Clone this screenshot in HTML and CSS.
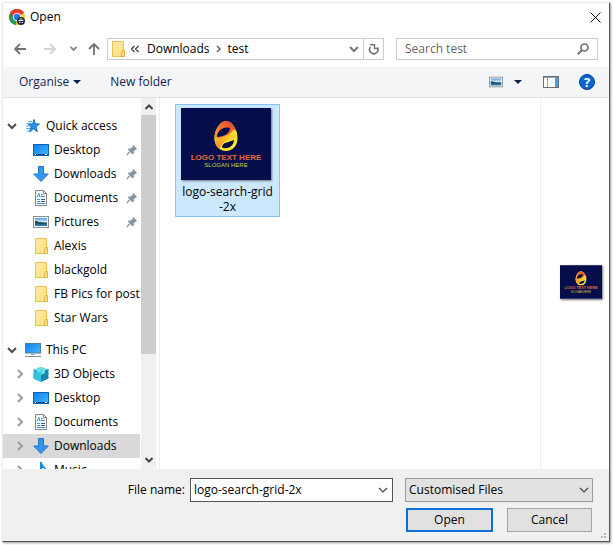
FILE: index.html
```html
<!DOCTYPE html>
<html lang="en-GB">
<head>
<meta charset="utf-8">
<title>Open</title>
<link rel="stylesheet" href="styles.css">
</head>
<body>
<svg class="defs" aria-hidden="true">
  <defs>
    <linearGradient id="sky" x1="0" y1="0" x2="1" y2="1"><stop offset="0" stop-color="#0c80e8"/><stop offset="1" stop-color="#45b8ff"/></linearGradient>
    <linearGradient id="gold" x1="0" y1="0" x2="1" y2="1"><stop offset="0" stop-color="#ffeaa6"/><stop offset="1" stop-color="#ffdf7d"/></linearGradient>
    <linearGradient id="egg-red" x1="0" y1="1" x2="1" y2="0"><stop offset="0" stop-color="#f9b428"/><stop offset=".5" stop-color="#ef7030"/><stop offset="1" stop-color="#e8382f"/></linearGradient>
    <linearGradient id="egg-band" x1="0" y1="1" x2="1" y2="0"><stop offset="0" stop-color="#f08a2c"/><stop offset=".6" stop-color="#fdc52c"/><stop offset="1" stop-color="#ffe62e"/></linearGradient>
    <linearGradient id="scene" x1="0" y1="0" x2="0" y2="1"><stop offset="0" stop-color="#4c9be8"/><stop offset=".5" stop-color="#dff1fb"/><stop offset=".6" stop-color="#2c5d6b"/><stop offset="1" stop-color="#2b7dbd"/></linearGradient>
    <symbol id="i-desktop" viewBox="0 0 16 16"><rect x=".5" y="2.500" width="15" height="11" fill="url(#sky)" stroke="#0b62b4"/><path d="M1 12.500h14" stroke="#0a4b91"/><path d="M2 12.500h1M12 12.500h2" stroke="#fff"/></symbol>
    <symbol id="i-down" viewBox="0 0 16 16"><path d="M5.500.5h5V8h4.800L8 15.500.7 8h4.800z" fill="#3795ea" stroke="#2076c8"/></symbol>
    <symbol id="i-doc" viewBox="0 0 16 16"><path d="M2.500.5h8l3 3v12h-11z" fill="#fff" stroke="#858585"/><path d="M10.500.5v3h3" fill="none" stroke="#858585"/><path d="M4 7.500l2-4 1 4M8 4.500h2M8 6.500h4M4 9.500h3M4 11.500h3M4 13.500h8" fill="none" stroke="#3f8fd8"/><path d="M8 9.500h4M8 11.500h4" stroke="#1f5f9f"/></symbol>
    <symbol id="i-pic" viewBox="0 0 16 16"><rect x=".5" y="2.500" width="15" height="11" fill="#fff" stroke="#878f96"/><rect x="2" y="4" width="12" height="8" fill="url(#scene)"/><path d="M2 7c3 0 6 2 12 2v1C9 10 6 9.500 2 9.500z" fill="#1e4d56"/></symbol>
    <symbol id="i-folder" viewBox="0 0 16 16"><path d="M2.500.5h11v15h-11z" fill="url(#gold)" stroke="#e8c04c"/><path d="M12.500 9.500h2v6h-3v-2z" fill="#ffe594" stroke="#e0b02c"/></symbol>
    <symbol id="i-star" viewBox="0 0 16 16"><path d="M9 1.500l1.300 4.300 4.200.2-3.500 2.800 1.400 5-3.800-2.900-4 3 1.500-5L3 6l4.600-.2z" fill="#2492e8" stroke="#1478c8"/><path d="M3 3.500h4M1.500 5.500H6M1 8h5M1 10.500h4M2 13h3" stroke="#55aef0"/></symbol>
    <symbol id="i-pc" viewBox="0 0 16 16"><rect x=".5" y="1.500" width="15" height="9.500" fill="url(#sky)" stroke="#4b7e9d"/><path d="M6 12h4v1H6z" fill="#9ab"/><path d="M0 14.500h16" stroke="#7b8c9b"/></symbol>
    <symbol id="i-cube" viewBox="0 0 16 16"><path d="M8 1l7.500 2L8 5.500.5 3z" fill="#9ceaf2"/><path d="M.5 3L8 5.500V16L.5 12.500z" fill="#26b5d2"/><path d="M15.500 3L8 5.500V16l7.500-3.500z" fill="#1189ad"/><path d="M4 2l4-1 4 1v5L8 9 4 7z" fill="#67dbe8"/><path d="M.5 8L8 5.500V16L.5 12.500z" fill="#35c5db"/></symbol>
    <symbol id="i-note" viewBox="0 0 16 16"><path d="M7 0h2c0 4 5 5 4 9-1-3-3-3-4-3v7a3 2.500 0 11-2-2z" fill="#128be8"/></symbol>
    <symbol id="i-pin" viewBox="0 0 12 12"><path d="M7 .8L11.200 5l-1.400.5-2 2 .1 2L6.500 10.300 1.800 5.600l1-1.200 2 .1 2-2z" fill="#8795a1"/><path d="M4 7.500L.8 11" stroke="#8795a1" stroke-width="1.200"/></symbol>
    <symbol id="i-open" viewBox="0 0 16 16"><path d="M4 6l4 4 4-4" fill="none" stroke="#4d4d4d" stroke-width="2"/></symbol>
    <symbol id="i-closed" viewBox="0 0 16 16"><path d="M6 4l4 4-4 4" fill="none" stroke="#9b9b9b" stroke-width="2"/></symbol>
    <symbol id="i-thin" viewBox="0 0 10 10"><path d="M1 3l4 4 4-4" fill="none" stroke="#444" stroke-width="1.200"/></symbol>
    <symbol id="i-caret" viewBox="0 0 8 4"><path d="M0 0h8L4 4z" fill="#0f2350"/></symbol>
    <symbol id="art" viewBox="0 0 90 72">
      <rect width="90" height="72" fill="#050d4b"/>
      <path d="M45 13c6 0 11.500 9 11.500 17 0 8-5 13-11.500 13s-11.500-5-11.500-13c0-8 5.500-17 11.500-17z" fill="#ffe62e"/>
      <path d="M33.800 33C32 24 39 13 45 13c5 0 9 6 10.500 11-4 0-5 3-10 5-5 2-9 1-11.700 4z" fill="url(#egg-red)"/>
      <path d="M34 34c3-5 15-5 18-12 1-1 3 0 4 3 1 5-4 6-8 7-5 1-8 4-9 9-2-1-4-3-5-7z" fill="url(#egg-band)"/>
      <path d="M36 29c0-6 6-11 13-9 0 5-6 9-13 9z" fill="#050d4b"/>
      <path d="M41 39.500c0-5 6-5 12-7.500 0 6-7 10-12 7.500z" fill="#050d4b"/>
      <text class="art-name" x="45" y="52" text-anchor="middle">LOGO TEXT HERE</text>
      <text class="art-slogan" x="45" y="59" text-anchor="middle">SLOGAN HERE</text>
    </symbol>
  </defs>
</svg>
<div class="window">
  <header class="title">
    <svg width="16" height="16" viewBox="0 0 16 16" aria-hidden="true"><circle cx="8" cy="8" r="8" fill="#ffcd40"/><path d="M8 8L1.100 4A8 8 0 0114.900 4z" fill="#e33b2e"/><path d="M8 8l-1 8A8 8 0 011.100 4z" fill="#1c9a50"/><path d="M1 4a8 8 0 0114 0H8L4 8z" fill="#e33b2e"/><circle cx="8" cy="8" r="4" fill="#fff"/><circle cx="8" cy="8" r="3.200" fill="#2b78e4"/><circle cx="12" cy="12" r="4" fill="#202733"/><path d="M9.500 11.500h5M10 13.500h1.500M12.500 13.500H14M10.500 10h3" stroke="#dfe6ef"/></svg>
    <h1>Open</h1>
    <button class="plain close" aria-label="Close"><svg width="11" height="11" viewBox="0 0 11 11"><path d="M.5.5l10 10M10.500.5l-10 10" stroke="#111"/></svg></button>
  </header>
  <nav class="navbar">
    <button class="plain" aria-label="Back"><svg width="12" height="12" viewBox="0 0 12 12"><path d="M12 6H1M6 1L1 6l5 5" fill="none" stroke="#737373" stroke-width="1.800"/></svg></button>
    <button class="plain forward" aria-label="Forward"><svg width="12" height="12" viewBox="0 0 12 12"><path d="M0 6h11M6 1l5 5-5 5" fill="none" stroke="#d4d4d4" stroke-width="1.800"/></svg></button>
    <button class="plain recent" aria-label="Recent locations"><svg width="7" height="12" viewBox="0 0 7 12"><path d="M.5 4l3 3 3-3" fill="none" stroke="#888" stroke-width="1.800"/></svg></button>
    <button class="plain up" aria-label="Up"><svg width="12" height="12" viewBox="0 0 12 12"><path d="M6 12V1M1 6l5-5 5 5" fill="none" stroke="#737373" stroke-width="1.800"/></svg></button>
    <div class="address">
      <svg width="16" height="16" aria-hidden="true"><use href="#i-folder"/></svg>
      <svg class="crumb-more" width="8" height="8" viewBox="0 0 8 8" aria-hidden="true"><path d="M3.500 1l-3 3 3 3M7.500 1l-3 3 3 3" fill="none" stroke="#444" stroke-width="1.300"/></svg>
      <a href="#downloads">Downloads</a>
      <svg class="crumb-sep" width="6" height="8" viewBox="0 0 6 8" aria-hidden="true"><path d="M1 1l3 3-3 3" fill="none" stroke="#666" stroke-width="1.500"/></svg>
      <a href="#test">test</a>
      <button class="plain history" aria-label="Previous locations"><svg width="10" height="10" viewBox="0 0 10 10"><path d="M1 3l4 4 4-4" fill="none" stroke="#777" stroke-width="2"/></svg></button>
      <button class="plain refresh" aria-label="Refresh"><svg width="12" height="12" viewBox="0 0 12 12"><path d="M2.500 4A4.200 4.200 0 109.500 4.500" fill="none" stroke="#737373" stroke-width="1.600"/><path d="M2 1.800h5.200M6.500 1v4.500h3.500" fill="none" stroke="#737373" stroke-width="1.500"/></svg></button>
    </div>
    <div class="search">
      <input type="search" aria-label="Search test" placeholder="Search test">
      <svg width="12" height="12" viewBox="0 0 12 12" aria-hidden="true"><circle cx="7.500" cy="4.500" r="3.500" fill="none" stroke="#737373" stroke-width="1.700"/><path d="M5 7L.8 11.200" stroke="#737373" stroke-width="2"/></svg>
    </div>
  </nav>
  <div class="toolbar">
    <button class="plain">Organise <svg width="8" height="4" aria-hidden="true"><use href="#i-caret"/></svg></button>
    <button class="plain new-folder">New folder</button>
    <button class="plain view" aria-label="Change view"><svg width="14" height="14"><use href="#i-pic"/></svg></button>
    <button class="plain view-more" aria-label="More view options"><svg width="8" height="4"><use href="#i-caret"/></svg></button>
    <button class="plain pane" aria-label="Preview pane"><svg width="16" height="12" viewBox="0 0 16 12"><rect x=".5" y=".5" width="15" height="11" fill="#fff" stroke="#6b6f75"/><path d="M1 1.500h14M4.500 2v9" stroke="#9aa0a6"/><path d="M12 1h3v10h-3z" fill="#3fa2ee"/></svg></button>
    <button class="plain help" aria-label="Help"><svg width="16" height="16" viewBox="0 0 16 16"><circle cx="8" cy="8" r="7.500" fill="#0a66cf" stroke="#06408f"/><text class="help-mark" x="8" y="13" text-anchor="middle">?</text></svg></button>
  </div>
  <main class="content">
    <ul class="tree">
      <li class="group"><svg><use href="#i-open"/></svg><svg><use href="#i-star"/></svg><span>Quick access</span></li>
      <li><i></i><svg><use href="#i-desktop"/></svg><span>Desktop</span><svg class="pin"><use href="#i-pin"/></svg></li>
      <li><i></i><svg><use href="#i-down"/></svg><span>Downloads</span><svg class="pin"><use href="#i-pin"/></svg></li>
      <li><i></i><svg><use href="#i-doc"/></svg><span>Documents</span><svg class="pin"><use href="#i-pin"/></svg></li>
      <li><i></i><svg><use href="#i-pic"/></svg><span>Pictures</span><svg class="pin"><use href="#i-pin"/></svg></li>
      <li><i></i><svg><use href="#i-folder"/></svg><span>Alexis</span></li>
      <li><i></i><svg><use href="#i-folder"/></svg><span>blackgold</span></li>
      <li><i></i><svg><use href="#i-folder"/></svg><span>FB Pics for posting</span></li>
      <li><i></i><svg><use href="#i-folder"/></svg><span>Star Wars</span></li>
      <li class="group second"><svg><use href="#i-open"/></svg><svg><use href="#i-pc"/></svg><span>This PC</span></li>
      <li><svg><use href="#i-closed"/></svg><svg><use href="#i-cube"/></svg><span>3D Objects</span></li>
      <li><svg><use href="#i-closed"/></svg><svg><use href="#i-desktop"/></svg><span>Desktop</span></li>
      <li><svg><use href="#i-closed"/></svg><svg><use href="#i-doc"/></svg><span>Documents</span></li>
      <li class="current"><svg><use href="#i-closed"/></svg><svg><use href="#i-down"/></svg><span>Downloads</span></li>
      <li><svg><use href="#i-closed"/></svg><svg><use href="#i-note"/></svg><span>Music</span></li>
    </ul>
    <div class="scrollbar" aria-hidden="true">
      <svg width="10" height="10" viewBox="0 0 10 10"><path d="M1.500 7L5 3.500 8.500 7" fill="none" stroke="#444" stroke-width="2"/></svg>
      <div class="track"><div class="thumb"></div></div>
      <svg width="10" height="10" viewBox="0 0 10 10"><path d="M1.500 3L5 6.500 8.500 3" fill="none" stroke="#444" stroke-width="2"/></svg>
    </div>
    <section class="files" aria-label="Files">
      <button class="tile"><svg class="thumb-art" width="90" height="72"><use href="#art"/></svg><span>logo-search-grid<br>-2x</span></button>
    </section>
    <aside class="preview" aria-label="Preview"><svg class="thumb-art" width="42" height="34"><use href="#art"/></svg></aside>
  </main>
  <footer class="actions">
    <label for="filename">File name:</label>
    <div class="combo">
      <input id="filename" type="text" value="logo-search-grid-2x">
      <button class="plain" aria-label="Recent file names"><svg width="10" height="10"><use href="#i-thin"/></svg></button>
    </div>
    <div class="filter">
      <select aria-label="File type"><option>Customised Files</option></select>
      <svg width="10" height="10" aria-hidden="true"><use href="#i-thin"/></svg>
    </div>
    <div class="buttons">
      <button class="push primary">Open</button>
      <button class="push">Cancel</button>
    </div>
    <svg class="grip" width="8" height="8" viewBox="0 0 8 8" aria-hidden="true"><path d="M4 0h2v2H4zM4 3h2v2H4zM1 3h2v2H1z" fill="#b5b5b5"/></svg>
  </footer>
</div>
</body>
</html>
```
FILE: styles.css
```css
* { box-sizing: border-box; }

body {
  margin: 0;
  background: #fff;
  color: #000;
  font: 12px/16px "Open Sans", "Noto Sans", sans-serif;
}

button, input, select { font: inherit; color: inherit; }
svg { display: block; flex: none; }
.defs { position: absolute; width: 0; height: 0; }

.plain {
  display: flex;
  align-items: center;
  padding: 0;
  border: 0;
  background: none;
}

.window {
  display: flex;
  flex-direction: column;
  height: calc(100vh - 5px);
  margin: 2px 3px 3px 2px;
  border: 1px solid #ececec;
  border-right-color: #555;
  border-bottom-color: #555;
  box-shadow: 1px 1px 2px #999;
}

.title {
  display: flex;
  align-items: center;
  gap: 5px;
  height: 28px;
  padding: 0 8px 0 6px;
}
.title h1 { margin: 0; font-size: 12px; font-weight: 400; }
.close { margin-left: auto; }

.navbar {
  display: flex;
  align-items: center;
  height: 36px;
  padding: 0 11px;
}
.forward { margin-left: 18px; }
.recent { margin-left: 14px; }
.up { margin: 0 7px 0 11px; }

.address {
  display: flex;
  flex: 1;
  align-items: center;
  height: 22px;
  padding-left: 2px;
  border: 1px solid #ccc;
}
.address a { color: #000; text-decoration: none; }
.crumb-more { margin: 0 8px 0 5px; }
.crumb-sep { margin: 0 6px; }
.history { margin: 0 4px 0 auto; }
.refresh { height: 100%; padding: 0 3px 0 4px; border-left: 1px solid #ccc; }

.search {
  display: flex;
  align-items: center;
  width: 202px;
  height: 22px;
  margin-left: 12px;
  padding: 0 8px;
  border: 1px solid #ccc;
}
.search input {
  flex: 1;
  min-width: 0;
  padding: 0;
  border: 0;
  outline: 0;
  background: none;
}
.search input::placeholder { color: #666; }

.toolbar {
  display: flex;
  align-items: center;
  height: 31px;
  padding: 0 14px 0 16px;
  border-bottom: 1px solid #e0e1e3;
  background: #f4f5f7;
  color: #152451;
}
.toolbar .plain { gap: 4px; }
.toolbar .new-folder { margin-left: 29px; }
.view { margin-left: auto; }
.view-more { margin-left: 11px; }
.pane { margin-left: 21px; }
.help { margin-left: 20px; }
.help-mark { fill: #fff; font: 700 13px "Open Sans", sans-serif; }

.content {
  display: flex;
  flex: 1;
  min-height: 0;
}

.tree {
  width: 137px;
  margin: 0;
  padding: 16px 0 0;
  overflow: hidden;
  list-style: none;
}
.tree li {
  display: flex;
  align-items: center;
  gap: 5px;
  height: 24px;
  padding-left: 9px;
  white-space: nowrap;
}
.tree .group { padding-left: 1px; }
.tree .second { margin-top: 8px; }
.tree .current { background: #d9d9d9; }
.tree svg, .tree i { flex: none; width: 16px; height: 16px; }
.tree .pin { width: 12px; height: 12px; margin: 0 2px 0 auto; }

.scrollbar {
  display: flex;
  flex-direction: column;
  align-items: center;
  gap: 3px;
  width: 15px;
  margin: 0 3px 0 1px;
  padding: 4px 0;
  background: #f0f0f0;
}
.track { display: flex; flex: 1; width: 100%; }
.thumb { width: 100%; height: 71%; background: #cdcdcd; }

.files {
  flex: 1;
  padding: 6px 15px;
  border: 1px solid #eee;
  border-width: 0 1px;
}
.tile {
  display: flex;
  flex-direction: column;
  align-items: flex-start;
  gap: 4px;
  width: 105px;
  height: 113px;
  padding: 3px 5px;
  border: 1px solid #84c5f8;
  background: #cce8ff;
  line-height: 15px;
}
.tile span { align-self: center; }
.thumb-art { box-shadow: 1px 1px 2px #777; }
.art-name { fill: #e9683a; font: 700 8px "Liberation Sans", sans-serif; }
.art-slogan { fill: #c4d23a; font: 6px "Liberation Sans", sans-serif; }

.preview {
  display: flex;
  align-items: center;
  justify-content: flex-end;
  width: 68px;
  padding: 0 7px 4px 0;
}

.actions {
  position: relative;
  display: grid;
  grid-template-columns: 175px minmax(0, 1fr) 188px;
  gap: 6px 12px;
  padding: 9px 16px 9px 0;
  background: #f0f0f0;
}
.actions label { align-self: center; margin-right: -7px; text-align: right; }
.combo {
  display: flex;
  height: 24px;
  padding: 0 4px 0 3px;
  border: 1px solid #555;
  background: #fff;
}
.combo input {
  flex: 1;
  min-width: 0;
  padding: 0;
  border: 0;
  outline: 0;
  background: none;
}
.filter { display: grid; align-items: center; height: 24px; }
.filter select, .filter svg { grid-area: 1 / 1; }
.filter svg { justify-self: end; margin-right: 4px; pointer-events: none; }
.filter select {
  width: 100%;
  height: 24px;
  padding: 0 3px;
  border: 1px solid #999;
  border-radius: 0;
  background: #e2e2e2;
  appearance: none;
}
.buttons {
  display: flex;
  grid-column: 3;
  gap: 14px;
  padding: 0 1px;
}
.push {
  flex: 1;
  height: 24px;
  padding: 0;
  border: 1px solid #a3a3a3;
  background: #e1e1e1;
}
.primary { border: 2px solid #0a70d6; }
.grip { position: absolute; right: 1px; bottom: 0; }
```
